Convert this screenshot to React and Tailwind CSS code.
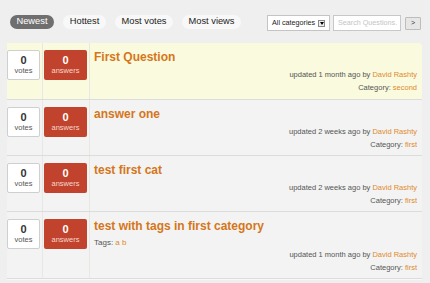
import React from "react";

const rows = [
  { title: "First Question", when: "1 month", cat: "second", hl: true },
  { title: "answer one", when: "2 weeks", cat: "first" },
  { title: "test first cat", when: "2 weeks", cat: "first" },
  { title: "test with tags in first category", when: "1 month", cat: "first", tags: ["a", "b"] },
];

function Row({ r, first }) {
  return (
    <div
      className={
        "flex border-b border-[#dcdcdc] shadow-[0_1px_0_#f8f8f8] " +
        (r.hl ? "bg-[#fafade] rounded-tr-[4px]" : "bg-[#f3f3f3]")
      }
    >
      <div className="w-[36px] shrink-0 border-r border-[#e8e8e2] pt-[7px]">
        <div className="w-[33px] h-[30px] bg-white border border-[#cfcfcf] rounded-[2px] flex flex-col items-center justify-center">
          <div className="text-[11px] font-bold text-[#333] leading-[11px]">0</div>
          <div className="text-[7.5px] text-[#555] leading-[10px]">votes</div>
        </div>
      </div>
      <div className="w-[47px] shrink-0 border-r border-[#e8e8e2] pl-[1px] pt-[7px]">
        <div className="w-[43px] h-[30px] bg-[#c1432d] rounded-[2px] flex flex-col items-center justify-center">
          <div className="text-[11px] font-bold text-white leading-[11px]">0</div>
          <div className="text-[7.5px] text-[#f6d6cc] leading-[10px]">answers</div>
        </div>
      </div>
      <div className={"flex-1 pl-[4px] pr-[5px] pt-[7px] " + (first ? "pb-[5px]" : "pb-[4px]")}>
        <div className="text-[12px] font-bold leading-[14px] text-[#d5761a] mb-[4px]">{r.title}</div>
        {r.tags && (
          <div className="text-[8px] leading-[11px] text-[#555]">
            Tags: <span className="text-[#e08a2e]">{r.tags.join(" ")}</span>
          </div>
        )}
        <div className="text-right text-[7.5px] leading-[13px] text-[#555]">
          <div>
            updated {r.when} ago by <span className="text-[#e08a2e]">David Rashty</span>
          </div>
          <div>
            Category: <span className="text-[#e08a2e]">{r.cat}</span>
          </div>
        </div>
      </div>
    </div>
  );
}

export default function App() {
  return (
    <div
      className="w-[430px] h-[283px] overflow-hidden bg-[#efefef]"
      style={{ fontFamily: "'Liberation Sans', Arial, sans-serif" }}
    >
      <div className="h-[43px] flex items-start justify-between pl-[10px] pr-[9px] pt-[15px]">
        <div className="flex gap-[9px] text-[9.3px] text-[#222]">
          <div className="w-[44px] h-[14px] rounded-full bg-[#6f6f6f] text-white flex items-center justify-center">Newest</div>
          <div className="w-[43px] h-[14px] rounded-full bg-[#f8f8f8] flex items-center justify-center">Hottest</div>
          <div className="w-[58px] h-[14px] rounded-full bg-[#f8f8f8] flex items-center justify-center">Most votes</div>
          <div className="w-[59px] h-[14px] rounded-full bg-[#f8f8f8] flex items-center justify-center">Most views</div>
        </div>
        <div className="flex items-center gap-[3px]">
          <div className="w-[63px] h-[16px] bg-white border border-[#c4c4c4] flex items-center pl-[4px] gap-[3px] text-[7.2px] text-[#222]">
            <span>All categories</span>
            <span className="w-[7px] h-[7px] border border-[#888] bg-[#eee] flex items-center justify-center">
              <span className="w-0 h-0 border-l-[2px] border-r-[2px] border-t-[3px] border-l-transparent border-r-transparent border-t-black"></span>
            </span>
          </div>
          <div className="w-[68px] h-[16px] bg-white border border-[#c8c8c8] flex items-center pl-[4px] text-[7.2px] text-[#c4c4c4]">
            Search Questions.
          </div>
          <div className="ml-[1px] w-[16px] h-[13px] bg-[#e6e6e6] border border-[#bdbdbd] rounded-[1px] flex items-center justify-center text-[7px] text-[#333]">
            &gt;
          </div>
        </div>
      </div>
      <div className="ml-[7px] w-[415px]">
        {rows.map((r, i) => (
          <Row key={i} r={r} first={i === 0} />
        ))}
      </div>
    </div>
  );
}
